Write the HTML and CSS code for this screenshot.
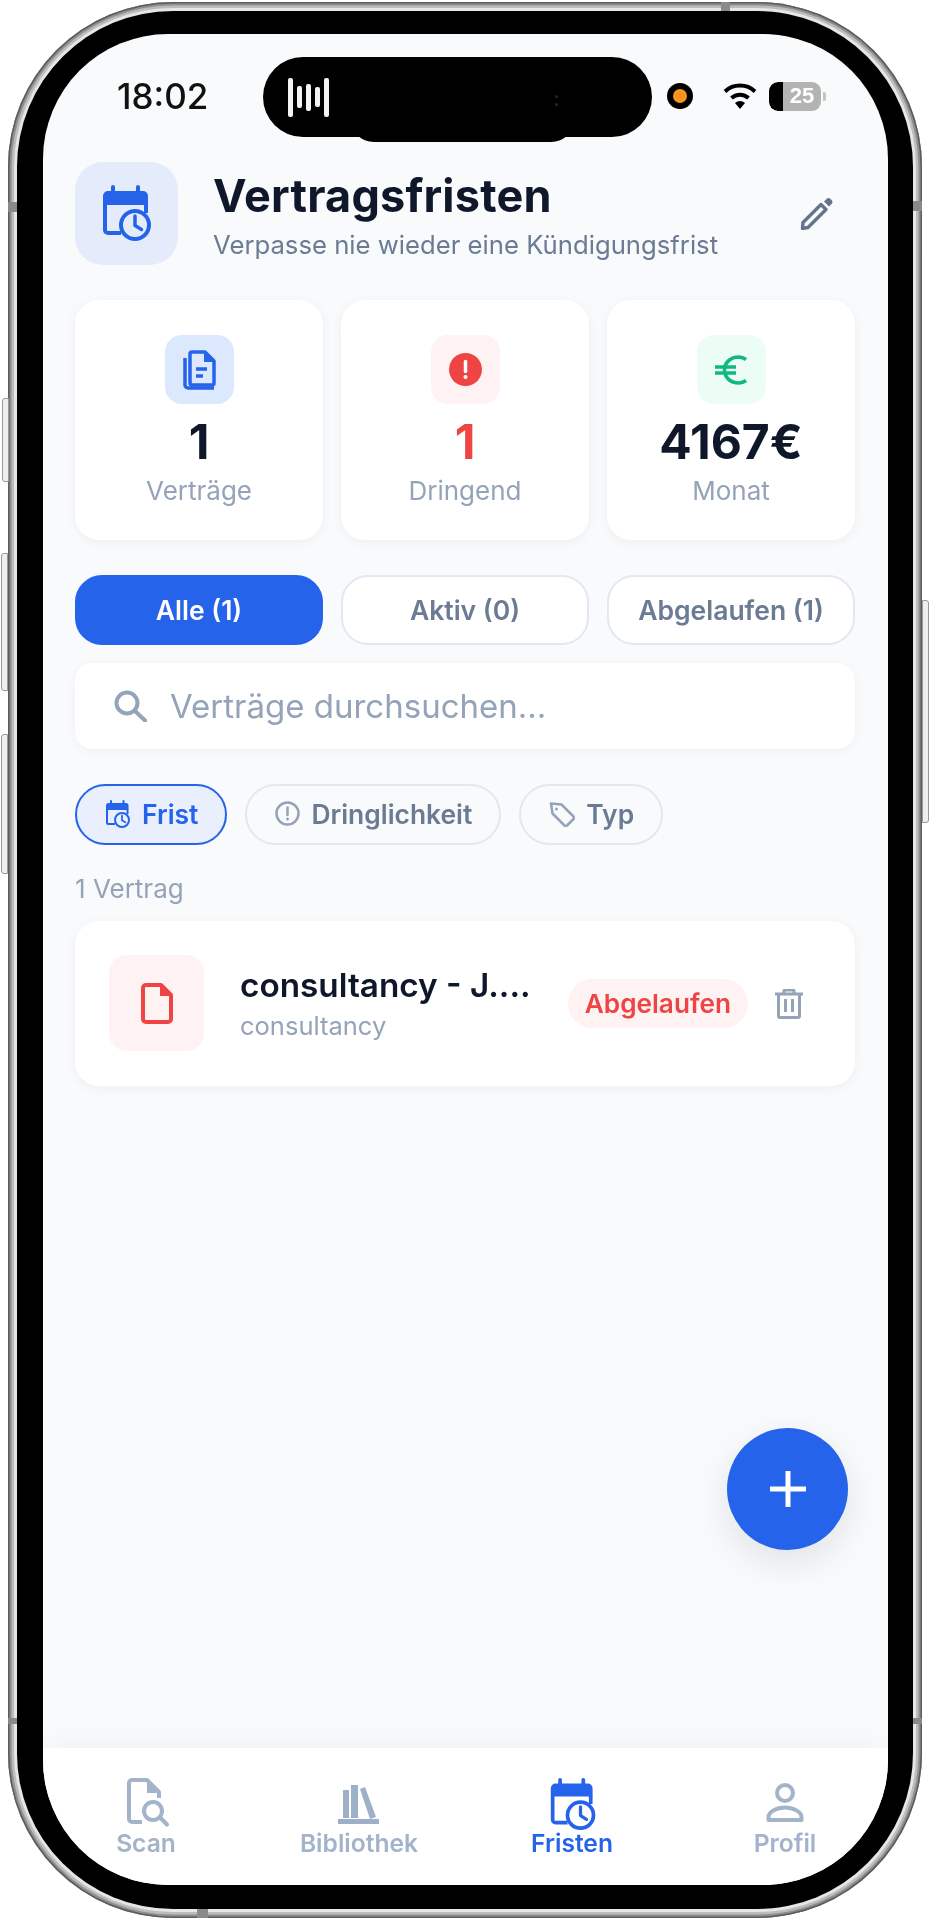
FILE: index.html
```html
<!DOCTYPE html>
<html lang="de">
<head>
    <meta charset="UTF-8">
    <title>Vertragsfristen</title>
    <link rel="stylesheet" href="styles.css">
</head>
<body>
    <svg class="defs" width="0" height="0">
        <symbol id="cal-clock" viewBox="0 0 50 56">
            <path d="M8 6V2a2 2 0 0 1 2-2h0a2 2 0 0 1 2 2v4h21V2a2 2 0 0 1 2-2h0a2 2 0 0 1 2 2v4h3a5 5 0 0 1 5 5v9H0v-9a5 5 0 0 1 5-5z" fill="currentColor"/>
            <path d="M2 19v26a3 3 0 0 0 3 3h13M43 19v9" fill="none" stroke="currentColor" stroke-width="4"/>
            <circle cx="32" cy="40" r="14" fill="none" stroke="currentColor" stroke-width="4"/>
            <path d="M32 31v9.500l6.500 4" fill="none" stroke="currentColor" stroke-width="3.500" stroke-linecap="round" stroke-linejoin="round"/>
        </symbol>
    </svg>

    <div class="phone">
        <span class="btn btn-mute"></span>
        <span class="btn btn-up"></span>
        <span class="btn btn-down"></span>
        <span class="btn btn-power"></span>
        <span class="notch n-top"></span>
        <span class="notch n-bottom"></span>
        <span class="notch n-left"></span>
        <span class="notch n-right"></span>
        <span class="notch n-left2"></span>
        <span class="notch n-right2"></span>

        <div class="bezel">
            <div class="screen">
                <div class="island">
                    <div class="bars"><i class="b1"></i><i class="b2"></i><i class="b3"></i><i class="b4"></i><i class="b1"></i></div>
                    <div class="cam"><i></i><i></i></div>
                </div>

                <div class="status">
                    <span class="time">18:02</span>
                    <div class="status-right">
                        <span class="rec"></span>
                        <svg class="wifi" width="34" height="26" viewBox="0 0 34 26">
                            <path d="M17 26l-5-6a7.500 7.500 0 0 1 10 0z" fill="#000"/>
                            <path d="M8.500 15a12.500 12.500 0 0 1 17 0M2 8.500a22 22 0 0 1 30 0" fill="none" stroke="#000" stroke-width="4"/>
                        </svg>
                        <div class="battery"><span class="batt-fill"></span><span class="batt-num">25</span></div>
                        <span class="batt-nub"></span>
                    </div>
                </div>

                <main class="content">
                    <header class="head">
                        <div class="head-icon">
                            <svg width="50" height="56"><use href="#cal-clock"/></svg>
                        </div>
                        <div class="head-text">
                            <h1>Vertragsfristen</h1>
                            <p>Verpasse nie wieder eine Kündigungsfrist</p>
                        </div>
                        <svg class="pencil" width="33" height="33" viewBox="0 0 33 33">
                            <path d="M3 25.500L21 7.500l5 5-18 18-5.500 1z" fill="none" stroke="#64748b" stroke-width="3.400" stroke-linejoin="round"/>
                            <path d="M24 4.500l3-3q1.500-1 3 0l2 2q1 1.500 0 3l-3 3z" fill="#64748b"/>
                        </svg>
                    </header>

                    <section class="stats">
                        <div class="stat">
                            <div class="stat-icon bg-blue">
                                <svg width="33" height="40" viewBox="0 0 33 40">
                                    <path d="M7 4a2 2 0 0 1 2-2h13l9 9v22a2 2 0 0 1-2 2H9a2 2 0 0 1-2-2z" fill="none" stroke="#2563eb" stroke-width="3.500" stroke-linejoin="round"/>
                                    <path d="M21 1l11 11H21z" fill="#2563eb"/>
                                    <path d="M13 19h11M13 26h7M2 8v27a3 3 0 0 0 3 3h26" fill="none" stroke="#2563eb" stroke-width="3.500"/>
                                </svg>
                            </div>
                            <div class="stat-num">1</div>
                            <div class="stat-label">Verträge</div>
                        </div>
                        <div class="stat">
                            <div class="stat-icon bg-red">
                                <svg width="33" height="33" viewBox="0 0 33 33">
                                    <circle cx="16.500" cy="16.500" r="16.500" fill="#ef4444"/>
                                    <path d="M16.500 8.500v10" stroke="#fff" stroke-width="3.500" stroke-linecap="round"/>
                                    <circle cx="16.500" cy="24" r="2" fill="#fff"/>
                                </svg>
                            </div>
                            <div class="stat-num red">1</div>
                            <div class="stat-label">Dringend</div>
                        </div>
                        <div class="stat">
                            <div class="stat-icon bg-green">
                                <svg width="32" height="30" viewBox="0 0 32 30">
                                    <path d="M31 4.500A13 13 0 0 0 24 2C15 2 9.500 8 9.500 15S15 28 24 28a13 13 0 0 0 7-2.500M0 12h21M0 18h21" fill="none" stroke="#10b981" stroke-width="3.600"/>
                                </svg>
                            </div>
                            <div class="stat-num">4167€</div>
                            <div class="stat-label">Monat</div>
                        </div>
                    </section>

                    <nav class="tabs">
                        <div class="tab active">Alle (1)</div>
                        <div class="tab">Aktiv (0)</div>
                        <div class="tab">Abgelaufen (1)</div>
                    </nav>

                    <div class="search">
                        <svg width="33" height="32" viewBox="0 0 33 32">
                            <circle cx="13" cy="13" r="10.500" fill="none" stroke="#94a3b8" stroke-width="4"/>
                            <path d="M21 21l10 9.500" stroke="#94a3b8" stroke-width="4" stroke-linecap="round"/>
                        </svg>
                        <span>Verträge durchsuchen...</span>
                    </div>

                    <div class="chips">
                        <div class="chip chip-on">
                            <svg width="25" height="28"><use href="#cal-clock"/></svg>
                            Frist
                        </div>
                        <div class="chip">
                            <svg width="25" height="25" viewBox="0 0 25 25">
                                <circle cx="12.500" cy="12.500" r="11" fill="none" stroke="#94a3b8" stroke-width="2.500"/>
                                <path d="M12.500 6.500v7.500" stroke="#94a3b8" stroke-width="2.500" stroke-linecap="round"/>
                                <circle cx="12.500" cy="18" r="1.500" fill="#94a3b8"/>
                            </svg>
                            Dringlichkeit
                        </div>
                        <div class="chip">
                            <svg width="26" height="26" viewBox="0 0 26 26">
                                <path d="M2 2.500l10.500 1 12 12a2 2 0 0 1 0 2.500l-6.500 6.500a2 2 0 0 1-2.500 0l-12-12z" fill="none" stroke="#94a3b8" stroke-width="2.500" stroke-linejoin="round"/>
                                <circle cx="7.500" cy="8" r="1.500" fill="#94a3b8"/>
                            </svg>
                            Typ
                        </div>
                    </div>

                    <div class="count">1 Vertrag</div>

                    <article class="card">
                        <div class="card-icon">
                            <svg width="32" height="41" viewBox="0 0 32 41">
                                <path d="M2 5a3 3 0 0 1 3-3h15l10 10v24a3 3 0 0 1-3 3H5a3 3 0 0 1-3-3z" fill="none" stroke="#ef4444" stroke-width="4" stroke-linejoin="round"/>
                                <path d="M19 1l12 12H19z" fill="#ef4444"/>
                            </svg>
                        </div>
                        <div class="card-text">
                            <div class="card-title">consultancy - J....</div>
                            <div class="card-sub">consultancy</div>
                        </div>
                        <span class="badge">Abgelaufen</span>
                        <svg class="trash" width="28" height="30" viewBox="0 0 28 30">
                            <path d="M0 5h28M9 5V2a1 1 0 0 1 1-1h8a1 1 0 0 1 1 1v3" fill="none" stroke="#94a3b8" stroke-width="3"/>
                            <path d="M3.500 5v22a1.500 1.500 0 0 0 1.500 1.500h18a1.500 1.500 0 0 0 1.500-1.500V5M10.500 10v13M17.500 10v13" fill="none" stroke="#94a3b8" stroke-width="3"/>
                        </svg>
                    </article>
                </main>

                <div class="fab">
                    <svg width="36" height="36" viewBox="0 0 36 36">
                        <path d="M18 0v36M0 18h36" stroke="#fff" stroke-width="5"/>
                    </svg>
                </div>

                <footer class="tabbar">
                    <div class="nav-item">
                        <svg width="50" height="50" viewBox="-2 0 50 50">
                            <path d="M8 2h16l12 12v6M19 44H9a3 3 0 0 1-3-3V5a3 3 0 0 1 3-3" fill="none" stroke="#a3b3c9" stroke-width="4" stroke-linejoin="round"/>
                            <path d="M24 3l12 12H24z" fill="#a3b3c9"/>
                            <circle cx="30" cy="33" r="9" fill="none" stroke="#a3b3c9" stroke-width="4"/>
                            <path d="M37 39.500l7 7" stroke="#a3b3c9" stroke-width="4" stroke-linecap="round"/>
                        </svg>
                        <span>Scan</span>
                    </div>
                    <div class="nav-item">
                        <svg width="50" height="50" viewBox="0 0 50 50">
                            <rect x="9" y="12" width="6" height="28" fill="#9db0c8"/>
                            <rect x="17" y="7" width="7" height="33" fill="#9db0c8"/>
                            <path d="M26 11l5-2 11 30-6 2z" fill="#9db0c8"/>
                            <rect x="4" y="41" width="41" height="5" fill="#9db0c8"/>
                        </svg>
                        <span>Bibliothek</span>
                    </div>
                    <div class="nav-item on">
                        <svg class="nav-cal" width="52" height="52"><use href="#cal-clock"/></svg>
                        <span>Fristen</span>
                    </div>
                    <div class="nav-item">
                        <svg width="50" height="50" viewBox="0 0 50 50">
                            <circle cx="25" cy="15" r="8" fill="none" stroke="#a3b3c9" stroke-width="4"/>
                            <path d="M8.500 42v-3c0-5 8-9.500 16.500-9.500S41.500 34 41.500 39v3z" fill="none" stroke="#a3b3c9" stroke-width="4" stroke-linejoin="round"/>
                        </svg>
                        <span>Profil</span>
                    </div>
                </footer>
            </div>
        </div>
    </div>
</body>
</html>
```

FILE: styles.css
```css
* { box-sizing: border-box; }
html, body { margin: 0; padding: 0; }
body { width: 932px; height: 1920px; background: #fff; overflow: hidden; font-family: Inter, "Noto Sans", sans-serif; color: #0f172a; }
.defs { position: absolute; }

/* phone frame */
.phone { position: relative; width: 914px; height: 1916px; margin: 2px 0 0 8px; padding: 9px; border-radius: 165px; background: #e6e6e6; box-shadow: inset 0 0 0 1.5px #5c5c5c, inset 0 0 0 3.5px #8f8f8f, inset 0 0 0 6px #bcbcbc; filter: blur(0.4px); }
.bezel { height: 100%; padding: 23px 25px 24px 26px; border-radius: 156px; background: #000; }
.screen { position: relative; display: flex; flex-direction: column; height: 100%; border-radius: 125px; background: #f8fafc; overflow: hidden; }

.btn { position: absolute; width: 7px; border: 1.5px solid #999; background: #eee; }
.btn-mute { left: -6px; top: 396px; height: 84px; border-radius: 3px 0 0 3px; }
.btn-up { left: -7px; top: 551px; height: 138px; border-radius: 3px 0 0 3px; }
.btn-down { left: -7px; top: 732px; height: 140px; border-radius: 3px 0 0 3px; }
.btn-power { right: -7px; top: 598px; height: 223px; border-radius: 0 3px 3px 0; }
.notch { position: absolute; background: #8a8a8a; }
.n-top { left: 713px; top: 0; width: 9px; height: 9px; }
.n-bottom { left: 189px; bottom: 0; width: 11px; height: 9px; }
.n-left { left: 0; top: 200px; width: 9px; height: 10px; }
.n-right { right: 0; top: 199px; width: 9px; height: 10px; }
.n-left2 { left: 0; top: 1716px; width: 9px; height: 6px; }
.n-right2 { right: 0; top: 1716px; width: 9px; height: 6px; }

/* dynamic island */
.island { position: absolute; left: 220px; top: 23px; width: 389px; height: 80px; display: flex; align-items: center; padding-left: 25px; border-radius: 40px; background: #000; z-index: 2; }
.island::after { content: ""; position: absolute; left: 87px; top: 40px; width: 225px; height: 45px; border-radius: 0 0 24px 24px; background: #000; }
.bars { display: flex; align-items: center; gap: 4px; }
.bars i { display: block; width: 5px; border-radius: 2px; background: #f3f3f3; }
.b1 { height: 39px; }
.b2 { height: 22px; }
.b3 { height: 27px; }
.b4 { height: 20px; }
.cam { position: absolute; left: 292px; top: 38px; display: flex; flex-direction: column; gap: 5px; z-index: 1; }
.cam i { display: block; width: 3px; height: 3px; border-radius: 50%; background: #222733; }

/* status bar */
.status { flex: none; display: flex; align-items: center; justify-content: space-between; height: 128px; padding: 0 62px 4px 74px; }
.time { font-size: 35px; font-weight: 500; color: #111; }
.status-right { display: flex; align-items: center; }
.rec { width: 26px; height: 26px; margin-right: 30px; border: 6.500px solid #000; border-radius: 50%; background: #f7931e; }
.wifi { margin-right: 12px; }
.battery { position: relative; display: flex; align-items: center; justify-content: center; width: 52px; height: 29px; padding-left: 14px; border-radius: 9px; background: #b3b3b3; overflow: hidden; }
.batt-fill { position: absolute; left: 0; top: 0; bottom: 0; width: 14px; background: #000; border-radius: 9px 0 0 9px; }
.batt-num { font-size: 22px; font-weight: 700; color: #fff; font-family: "Liberation Sans", sans-serif; }
.batt-nub { width: 3px; height: 9px; margin-left: 2px; border-radius: 0 2px 2px 0; background: #c4c4c4; }

/* content */
.content { flex: 1; padding: 0 33px 0 32px; }
.head { display: flex; align-items: center; }
.head-icon { flex: none; display: flex; align-items: center; justify-content: center; width: 103px; height: 103px; margin-right: 35px; padding: 0 0 2px 3px; border-radius: 28px; background: #e4ecfb; color: #2563eb; }
.head-text { flex: 1; padding-top: 4px; }
.head-text h1 { margin: 0; font-size: 45px; line-height: 54px; font-weight: 700; color: #0f172a; letter-spacing: 0.2px; }
.head-text p { margin: 5px 0 0; font-size: 25.700px; line-height: 34px; color: #6b7b93; }
.pencil { margin-right: 22px; flex: none; }

.stats { display: grid; grid-template-columns: repeat(3, 1fr); gap: 18px; margin-top: 35px; }
.stat { display: flex; flex-direction: column; align-items: center; height: 240px; padding-top: 35px; border-radius: 24px; background: #fff; box-shadow: 0 2px 12px rgba(15, 23, 42, 0.05); }
.stat-icon { display: flex; align-items: center; justify-content: center; width: 69px; height: 69px; border-radius: 17px; }
.bg-blue { background: #dbe8fe; }
.bg-red { background: #fef2f2; }
.bg-green { background: #ecfdf5; }
.stat-num { margin-top: 10px; font-size: 48px; line-height: 56px; font-weight: 700; color: #0f172a; }
.stat-num.red { color: #ef4444; }
.stat-label { margin-top: 4px; font-size: 26px; line-height: 34px; color: #94a3b8; }

.tabs { display: grid; grid-template-columns: repeat(3, 1fr); gap: 18px; margin-top: 35px; }
.tab { display: flex; align-items: center; justify-content: center; height: 70px; border: 2px solid #e2e8f0; border-radius: 27px; background: #fff; font-size: 26.500px; font-weight: 600; color: #6b7b93; }
.tab.active { border-color: #2563eb; background: #2563eb; color: #fff; }

.search { display: flex; align-items: center; gap: 23px; height: 86px; margin-top: 18px; padding-left: 39px; border-radius: 18px; background: #fff; box-shadow: 0 2px 12px rgba(15, 23, 42, 0.04); font-size: 33px; color: #94a3b8; }

.chips { display: flex; gap: 18px; margin-top: 35px; }
.chip { display: flex; align-items: center; gap: 11px; height: 61px; padding: 0 27px 2px 28px; border: 2px solid #e2e8f0; border-radius: 31px; font-size: 26.400px; font-weight: 600; color: #6b7b93; }
.chip-on { padding: 0 27px 2px 29px; border: 2.500px solid #2563eb; background: #e9effc; color: #2563eb; }
.count { margin-top: 29px; font-size: 26px; line-height: 30px; color: #94a3b8; }

.card { display: flex; align-items: center; height: 165px; margin-top: 17px; padding: 0 52px 0 34px; border-radius: 24px; background: #fff; box-shadow: 0 2px 12px rgba(15, 23, 42, 0.05); }
.card-icon { flex: none; display: flex; align-items: center; justify-content: center; width: 95px; height: 96px; margin: 0 36px 1px 0; border-radius: 18px; background: #fef2f2; }
.card-text { flex: 1; min-width: 0; }
.card-title { margin-top: -2px; font-size: 33.300px; line-height: 40px; font-weight: 600; color: #0f172a; white-space: nowrap; }
.card-sub { margin-top: 6px; font-size: 25.500px; line-height: 30px; color: #94a3b8; }
.badge { flex: none; display: flex; align-items: center; height: 49px; padding: 0 17px; border-radius: 25px; background: #fef2f2; font-size: 26.200px; font-weight: 600; color: #ef4444; }
.trash { flex: none; margin-left: 27px; }

.fab { position: absolute; left: 684px; top: 1394px; display: flex; align-items: center; justify-content: center; width: 121px; height: 122px; border-radius: 50%; background: #2563eb; box-shadow: 0 12px 36px rgba(15, 23, 42, 0.1); }

/* bottom tabs */
.tabbar { flex: none; display: grid; grid-template-columns: repeat(4, 213px); justify-content: center; height: 137px; padding-top: 30px; background: #fff; box-shadow: 0 -6px 24px rgba(15, 23, 42, 0.03); }
.nav-item { display: flex; flex-direction: column; align-items: center; font-size: 24.600px; line-height: 28px; font-weight: 600; color: #a3b3c9; }
.nav-item svg { margin-bottom: 1px; }
.nav-item .nav-cal { margin: 0 0 -1px 3px; }
.nav-item.on { color: #2563eb; }
```
